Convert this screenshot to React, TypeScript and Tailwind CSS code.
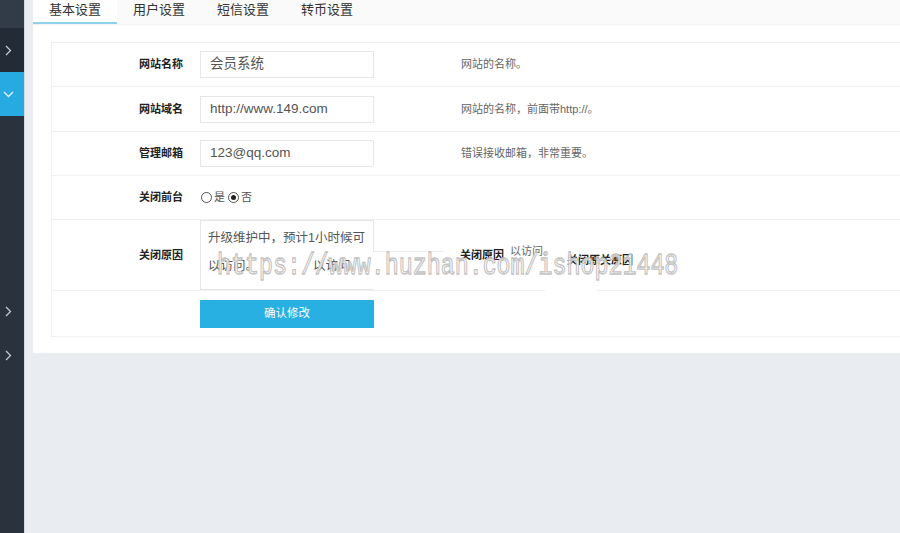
import React from 'react';

const ChevronRight = () => (
  <svg width="7" height="11" viewBox="0 0 7 11" fill="none">
    <path d="M1 1l4.5 4.5L1 10" stroke="#c3cad3" strokeWidth="1.3" />
  </svg>
);

const ChevronDown = () => (
  <svg width="11" height="7" viewBox="0 0 11 7" fill="none">
    <path d="M1 1l4.5 4.5L10 1" stroke="#e6f6fd" strokeWidth="1.3" />
  </svg>
);

const tabs = ['基本设置', '用户设置', '短信设置', '转币设置'];

const Label: React.FC<{ text: string }> = ({ text }) => (
  <div className="w-[139px] shrink-0 pr-[8px] text-right text-[11px] font-bold text-[#222]">{text}</div>
);

const Radio: React.FC<{ checked?: boolean; text: string }> = ({ checked, text }) => (
  <span className="flex items-center gap-[2px] mr-[3px]">
    <span className="w-[11px] h-[11px] rounded-full border border-[#555] flex items-center justify-center bg-white">
      {checked && <span className="w-[5px] h-[5px] rounded-full bg-[#222]" />}
    </span>
    <span className="text-[11px] text-[#555]">{text}</span>
  </span>
);

const App: React.FC = () => {
  const fields = [
    { label: '网站名称', value: '会员系统', tip: '网站的名称。', h: 'h-[44px]' },
    { label: '网站域名', value: 'http://www.149.com', tip: '网站的名称，前面带http://。', h: 'h-[45px]' },
    { label: '管理邮箱', value: '123@qq.com', tip: '错误接收邮箱，非常重要。', h: 'h-[44px]' },
  ];

  return (
    <div className="relative flex w-[900px] h-[533px] overflow-hidden font-['Liberation_Sans','Noto_Sans_CJK_SC',sans-serif]">
      {/* sidebar */}
      <aside className="w-[25px] shrink-0 bg-[#29323d] border-r border-[#d3d9df] flex flex-col">
        <div className="h-[28px] bg-[#323c48]" />
        <div className="h-[44px] bg-[#232c36] flex items-center pl-[5px]"><ChevronRight /></div>
        <div className="h-[44px] bg-[#27aae1] flex items-center pl-[3px]"><ChevronDown /></div>
        <div className="h-[173px]" />
        <div className="h-[44px] flex items-center pl-[5px]"><ChevronRight /></div>
        <div className="h-[44px] flex items-center pl-[5px]"><ChevronRight /></div>
      </aside>

      {/* main */}
      <main className="flex-1 bg-[#e9ecf0]">
        <div className="ml-[8px] h-[353px] bg-white">
          <div className="h-[25px] bg-[#fafafa] border-b border-[#f0f0f0] flex">
            {tabs.map((t, i) => (
              <div
                key={t}
                className={`w-[84px] h-[24px] text-center text-[13px] leading-[20px] text-[#333] ${i === 0 ? 'border-b-2 border-[#8fd2ec] bg-white' : ''}`}
              >
                {t}
              </div>
            ))}
          </div>

          <div className="mt-[17px] ml-[18px] border-l border-t border-[#efefef]">
            {fields.map((f) => (
              <div key={f.label} className={`${f.h} flex items-center border-b border-[#f0f0f0]`}>
                <Label text={f.label} />
                <div className="pl-[9px]">
                  <div className="w-[174px] h-[27px] border border-[#e6e6e6] px-[9px] flex items-center text-[13.5px] text-[#555]">
                    {f.value}
                  </div>
                </div>
                <div className="ml-[87px] text-[11px] text-[#666]">{f.tip}</div>
              </div>
            ))}

            <div className="h-[44px] flex items-center border-b border-[#f0f0f0]">
              <Label text="关闭前台" />
              <div className="pl-[10px] flex items-center">
                <Radio text="是" />
                <Radio checked text="否" />
              </div>
            </div>

            <div className="h-[71px] flex items-center border-b border-[#f0f0f0]">
              <Label text="关闭原因" />
              <div className="pl-[9px]">
                <div className="w-[174px] h-[70px] border border-[#e6e6e6] px-[7px] pt-[3px] text-[12.5px] leading-[28px] text-[#555]">
                  <div>升级维护中，预计1小时候可</div>
                  <div className="flex">
                    <span>以访问。</span>
                    <span className="ml-[55px]">以访问。</span>
                  </div>
                </div>
              </div>
            </div>

            <div className="h-[46px] flex items-center border-b border-[#f0f0f0]">
              <div className="w-[139px] shrink-0" />
              <div className="pl-[9px]">
                <button className="w-[174px] h-[28px] bg-[#29b0e3] text-white text-[11.5px]">确认修改</button>
              </div>
            </div>
          </div>
        </div>
      </main>

      {/* glitch fragments from the capture */}
      <div className="absolute left-[373px] top-[251px] w-[71px] h-[38px] bg-white border-t border-[#ececec]" />
      <div className="absolute left-[545px] top-[289px] w-[52px] h-[2px] bg-white" />
      <div className="absolute left-[460px] top-[250px] text-[11px] font-bold text-[#222] leading-none">关闭原因</div>
      <div className="absolute left-[510px] top-[246px] text-[11px] text-[#666] leading-none">以访问。</div>
      <div className="absolute left-[567px] top-[255px] text-[11px] font-bold text-[#222] leading-none">关闭原关原因</div>

      {/* watermark */}
      <div className="absolute left-[217px] top-[255px] origin-center scale-y-[1.3] text-[23.3px] leading-none font-['Liberation_Mono',monospace] text-[rgba(255,255,255,0.8)] [-webkit-text-stroke:1px_#c2c2c2] pointer-events-none whitespace-nowrap">
        https://www.huzhan.com/ishop21448
      </div>
    </div>
  );
};

export default App;
